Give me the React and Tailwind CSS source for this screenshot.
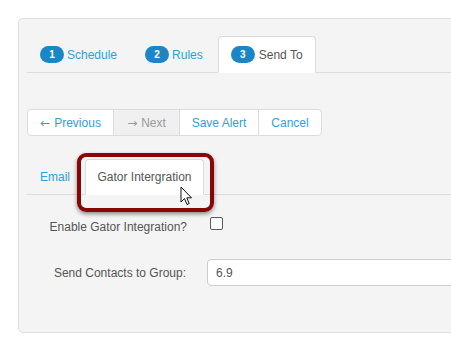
import React from "react";

function Badge({ n }) {
  return (
    <span className="inline-flex items-center justify-center w-[24px] h-[17px] rounded-full bg-[#1b86c6] text-white text-[10px] font-bold leading-none">
      {n}
    </span>
  );
}

function Cursor() {
  return (
    <svg width="13" height="20" viewBox="0 0 13 20" className="absolute left-[95px] top-[27px]">
      <path d="M1 1 L1 16 L4.5 12.5 L7 18.5 L9.2 17.6 L6.8 11.8 L11.5 11.8 Z" fill="#fff" stroke="#111" strokeWidth="1" strokeLinejoin="round" />
    </svg>
  );
}

function Arrow({ ch }) {
  return (
    <span className="mr-[4px]" style={{ fontFamily: '"DejaVu Sans", sans-serif' }}>
      {ch}
    </span>
  );
}

export default function App() {
  return (
    <div
      className="w-[451px] h-[346px] overflow-hidden bg-white pt-[18px] pl-[18px] text-[12px] text-[#555]"
      style={{ fontFamily: '"Liberation Sans", Arial, sans-serif' }}
    >
      <div className="w-[520px] h-[315px] bg-[#f4f4f4] border border-[#dedede] rounded-[5px] pt-[17px] pl-[8px]">
        {/* Step tabs */}
        <div className="flex border-b border-[#dcdcdc]">
          <div className="h-[37px] -mb-px mr-[2px] pl-[12px] pr-[12px] flex items-center gap-[3px] border border-transparent text-[#2d9fdb]">
            <Badge n="1" />
            <span>Schedule</span>
          </div>
          <div className="h-[37px] -mb-px mr-[2px] px-[12px] flex items-center gap-[3px] border border-transparent text-[#2d9fdb]">
            <Badge n="2" />
            <span>Rules</span>
          </div>
          <div className="h-[37px] -mb-px px-[12px] flex items-center gap-[4px] border border-[#dcdcdc] border-b-transparent bg-white rounded-t-[4px] text-[#555]">
            <Badge n="3" />
            <span>Send To</span>
          </div>
        </div>

        {/* Button group */}
        <div className="mt-[36px] inline-flex h-[27px] border border-[#dcdcdc] rounded-[4px] bg-white overflow-hidden">
          <div className="w-[86px] flex items-center justify-center border-r border-[#dcdcdc] text-[#2d9fdb]">
            <Arrow ch="←" />Previous
          </div>
          <div className="w-[66px] flex items-center justify-center border-r border-[#dcdcdc] bg-[#f0f0f0] text-[#9a9a9a]">
            <Arrow ch="→" />Next
          </div>
          <div className="w-[79px] flex items-center justify-center border-r border-[#dcdcdc] text-[#2d9fdb]">Save Alert</div>
          <div className="w-[62px] flex items-center justify-center text-[#2d9fdb]">Cancel</div>
        </div>

        {/* Sub tabs */}
        <div className="mt-[23px] flex border-b border-[#dcdcdc]">
          <div className="h-[36px] -mb-px mr-[2px] px-[12px] flex items-center border border-transparent text-[#2d9fdb]">Email</div>
          <div className="relative">
            <div className="h-[36px] -mb-px w-[119px] flex items-center justify-center border border-[#dcdcdc] border-b-transparent bg-white rounded-t-[4px] text-[#555]">
              Gator Intergration
            </div>
            <div className="absolute left-[-8px] top-[-6px] w-[137px] h-[59px] border-[4px] border-[#870606] rounded-[9px] shadow-[0_2px_4px_rgba(0,0,0,0.45)]" />
            <Cursor />
          </div>
        </div>

        {/* Form */}
        <div className="mt-[19px] flex items-center h-[26px]">
          <div className="w-[160px] text-right">Enable Gator Integration?</div>
          <div className="ml-[23px] w-[13px] h-[13px] mt-[-7px] border border-[#5a5a5a] rounded-[2px] bg-white" />
        </div>
        <div className="mt-[19px] flex items-center">
          <div className="w-[159px] text-right">Send Contacts to Group:</div>
          <div className="ml-[21px] w-[300px] h-[27px] border border-[#cccccc] rounded-[4px] bg-white flex items-center pl-[8px] text-[#555]">
            6.9
          </div>
        </div>
      </div>
    </div>
  );
}
